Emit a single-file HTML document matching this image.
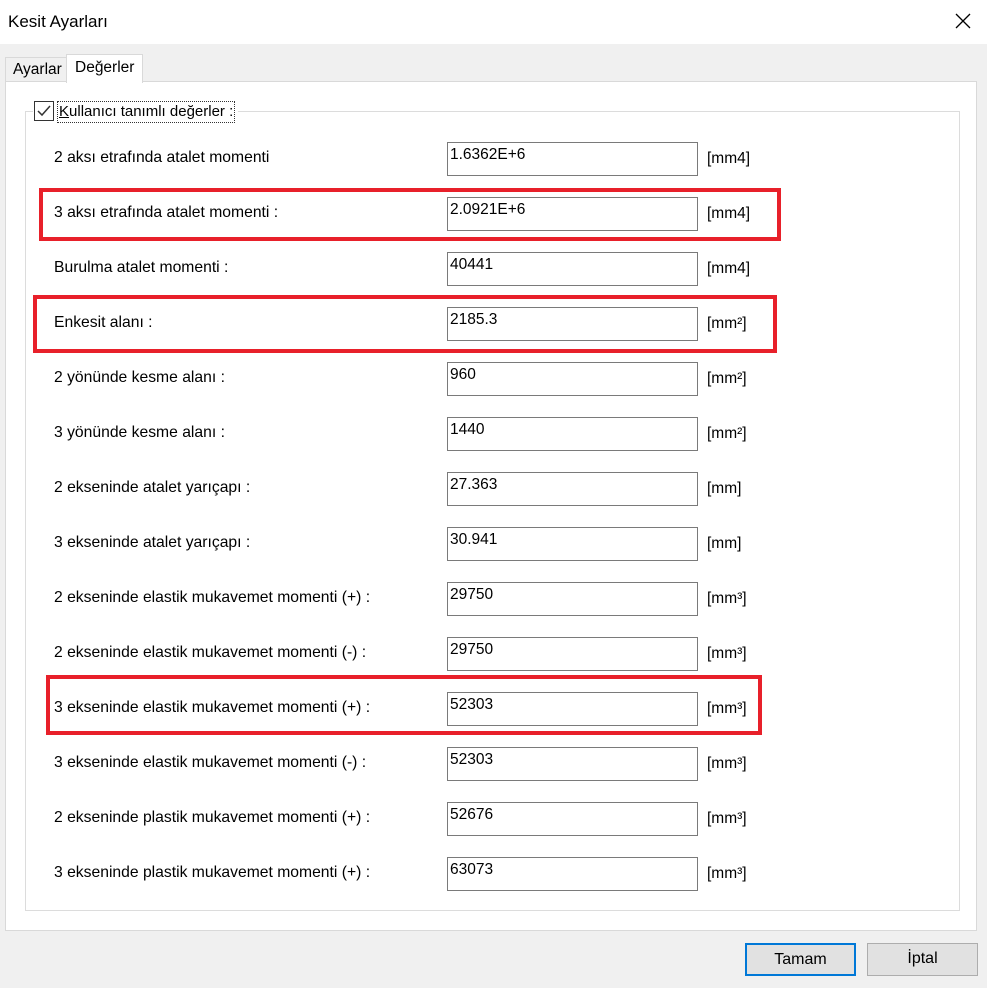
<!DOCTYPE html>
<html><head><meta charset="utf-8"><style>
*{margin:0;padding:0;box-sizing:border-box}
body{width:987px;height:988px;background:#f0f0f0;font-family:"Liberation Sans",sans-serif;font-size:15px;color:#000;position:relative;overflow:hidden}
.a{position:absolute}
.title{left:0;top:0;width:987px;height:44px;background:#fff}
.lbl{left:54px;white-space:nowrap;font-size:15.7px}
.inp{left:447px;width:251px;height:34px;background:#fff;border:1px solid #7a7a7a;padding:3px 2px;font-size:15.5px}
.unit{left:707px;font-size:15.5px}
.red{border:4px solid #e8202a}
.btn{height:33px;background:#e1e1e1;border:1px solid #adadad;text-align:center;line-height:30px;font-size:16px}
</style></head><body>
<div class="a title"></div>
<div class="a" style="left:8px;top:12px;font-size:17px">Kesit Ayarları</div>
<svg class="a" style="left:955px;top:13px" width="16" height="16"><path d="M1 1L15 15M15 1L1 15" stroke="#000" stroke-width="1.3"/></svg>
<div class="a" style="left:5px;top:57px;width:62px;height:25px;border:1px solid #d9d9d9;border-bottom:none;background:#f0f0f0;padding:3px 0 0 7px;font-size:15.5px">Ayarlar</div>
<div class="a" style="left:5px;top:81px;width:972px;height:850px;background:#fff;border:1px solid #d9d9d9"></div>
<div class="a" style="left:66px;top:54px;width:77px;height:29px;border:1px solid #d9d9d9;border-bottom:none;background:#fff;padding:4px 0 0 8px;font-size:15.5px">Değerler</div>
<div class="a" style="left:25px;top:111px;width:935px;height:800px;border:1px solid #dcdcdc"></div>
<div class="a" style="left:33px;top:100px;width:205px;height:24px;background:#fff"></div>
<div class="a" style="left:34px;top:101px;width:20px;height:20px;border:1px solid #333;background:#fff"></div>
<svg class="a" style="left:36px;top:103px" width="16" height="16"><path d="M2 8L6 12L14 3" stroke="#333" stroke-width="1.5" fill="none"/></svg>
<div class="a" style="left:57px;top:101px;width:178px;height:22px;border:1px dotted #333;padding:1px 0 0 1px;font-size:15px;white-space:nowrap;overflow:hidden"><u>K</u>ullanıcı tanımlı değerler :</div>

<div class="a lbl" style="top:149px">2 aksı etrafında atalet momenti</div>
<div class="a inp" style="top:142px">1.6362E+6</div><div class="a unit" style="top:150px">[mm4]</div>
<div class="a lbl" style="top:204px">3 aksı etrafında atalet momenti :</div>
<div class="a inp" style="top:197px">2.0921E+6</div><div class="a unit" style="top:205px">[mm4]</div>
<div class="a lbl" style="top:259px">Burulma atalet momenti :</div>
<div class="a inp" style="top:252px">40441</div><div class="a unit" style="top:260px">[mm4]</div>
<div class="a lbl" style="top:314px">Enkesit alanı :</div>
<div class="a inp" style="top:307px">2185.3</div><div class="a unit" style="top:315px">[mm²]</div>
<div class="a lbl" style="top:369px">2 yönünde kesme alanı :</div>
<div class="a inp" style="top:362px">960</div><div class="a unit" style="top:370px">[mm²]</div>
<div class="a lbl" style="top:424px">3 yönünde kesme alanı :</div>
<div class="a inp" style="top:417px">1440</div><div class="a unit" style="top:425px">[mm²]</div>
<div class="a lbl" style="top:479px">2 ekseninde atalet yarıçapı :</div>
<div class="a inp" style="top:472px">27.363</div><div class="a unit" style="top:480px">[mm]</div>
<div class="a lbl" style="top:534px">3 ekseninde atalet yarıçapı :</div>
<div class="a inp" style="top:527px">30.941</div><div class="a unit" style="top:535px">[mm]</div>
<div class="a lbl" style="top:589px">2 ekseninde elastik mukavemet momenti (+) :</div>
<div class="a inp" style="top:582px">29750</div><div class="a unit" style="top:590px">[mm³]</div>
<div class="a lbl" style="top:644px">2 ekseninde elastik mukavemet momenti (-) :</div>
<div class="a inp" style="top:637px">29750</div><div class="a unit" style="top:645px">[mm³]</div>
<div class="a lbl" style="top:699px">3 ekseninde elastik mukavemet momenti (+) :</div>
<div class="a inp" style="top:692px">52303</div><div class="a unit" style="top:700px">[mm³]</div>
<div class="a lbl" style="top:754px">3 ekseninde elastik mukavemet momenti (-) :</div>
<div class="a inp" style="top:747px">52303</div><div class="a unit" style="top:755px">[mm³]</div>
<div class="a lbl" style="top:809px">2 ekseninde plastik mukavemet momenti (+) :</div>
<div class="a inp" style="top:802px">52676</div><div class="a unit" style="top:810px">[mm³]</div>
<div class="a lbl" style="top:864px">3 ekseninde plastik mukavemet momenti (+) :</div>
<div class="a inp" style="top:857px">63073</div><div class="a unit" style="top:865px">[mm³]</div>

<div class="a red" style="left:39px;top:188px;width:742px;height:53px"></div>
<div class="a red" style="left:33px;top:295px;width:744px;height:58px"></div>
<div class="a red" style="left:46px;top:675px;width:716px;height:60px"></div>

<div class="a btn" style="left:745px;top:943px;width:111px;border:2px solid #0078d7">Tamam</div>
<div class="a btn" style="left:867px;top:943px;width:111px">İptal</div>
</body></html>
